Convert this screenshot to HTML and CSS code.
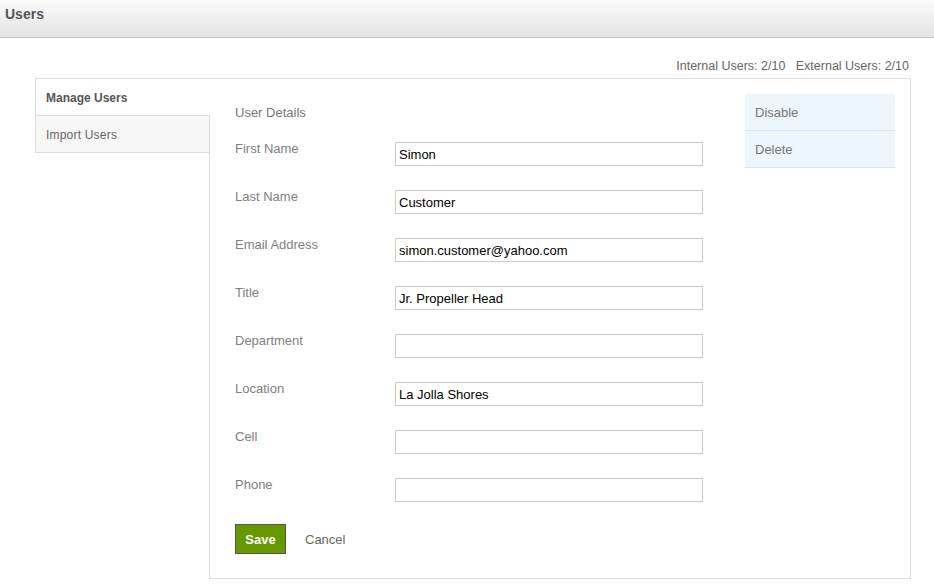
FILE: index.html
```html
<!DOCTYPE html>
<html>
<head>
<meta charset="utf-8">
<title>Users</title>
<link rel="stylesheet" href="styles.css">
</head>
<body>
<div class="header">Users</div>
<div class="wrap">
  <div class="stats">Internal Users: 2/10&nbsp;&nbsp; External Users: 2/10</div>
  <div class="layout">
    <div class="sidebar">
      <div class="tab active">Manage Users</div>
      <div class="tab">Import Users</div>
    </div>
    <div class="panel">
      <form class="form">
        <div class="section-title">User Details</div>
        <div class="row"><label>First Name</label><input type="text" value="Simon"></div>
        <div class="row"><label>Last Name</label><input type="text" value="Customer"></div>
        <div class="row"><label>Email Address</label><input type="text" value="simon.customer@yahoo.com"></div>
        <div class="row"><label>Title</label><input type="text" value="Jr. Propeller Head"></div>
        <div class="row"><label>Department</label><input type="text" value=""></div>
        <div class="row"><label>Location</label><input type="text" value="La Jolla Shores"></div>
        <div class="row"><label>Cell</label><input type="text" value=""></div>
        <div class="row"><label>Phone</label><input type="text" value=""></div>
        <div class="buttons">
          <button type="button" class="save">Save</button>
          <span class="cancel">Cancel</span>
        </div>
      </form>
      <div class="actions">
        <div class="action">Disable</div>
        <div class="action">Delete</div>
      </div>
    </div>
  </div>
</div>
</body>
</html>
```
FILE: styles.css
```css
* { box-sizing: border-box; }
body {
  margin: 0;
  font-family: "Liberation Sans", Arial, sans-serif;
  background: #fff;
  color: #666;
}
.header {
  height: 38px;
  border-bottom: 1px solid #c9c9c9;
  background: linear-gradient(#fbfbfb, #e3e3e3);
  font-size: 14px;
  font-weight: bold;
  color: #555;
  padding-left: 5px;
  line-height: 29px;
}
.wrap {
  padding: 0 23px 0 35px;
}
.stats {
  margin-top: 21px;
  margin-bottom: 5px;
  text-align: right;
  padding-right: 2px;
  font-size: 12.5px;
  line-height: 14px;
  color: #666;
}
.layout {
  display: flex;
  align-items: flex-start;
}
.sidebar {
  width: 174px;
  flex: none;
  position: relative;
  z-index: 1;
}
.tab {
  height: 37px;
  line-height: 36px;
  padding: 1px 0 0 10px;
  font-size: 12px;
  letter-spacing: 0.2px;
  color: #666;
  background: #f7f7f7;
  border-left: 1px solid #dcdcdc;
  border-bottom: 1px solid #dcdcdc;
}
.tab.active {
  height: 38px;
  line-height: 36px;
  border-top: 1px solid #dcdcdc;
  background: #fff;
  margin-right: -1px;
  font-weight: bold;
  letter-spacing: 0;
  color: #555;
}
.panel {
  flex: none;
  width: 702px;
  height: 501px;
  border: 1px solid #dcdcdc;
  display: flex;
  align-items: flex-start;
  justify-content: space-between;
  padding: 15px 15px 0 25px;
}
.form {
  width: 468px;
  margin-top: 10px;
}
.section-title {
  font-size: 13px;
  line-height: 16px;
  padding-top: 1px;
  color: #777;
  margin-bottom: 19px;
}
.row {
  display: flex;
  height: 48px;
}
.row label {
  width: 160px;
  padding-top: 1px;
  font-size: 13px;
  line-height: 16px;
  color: #808080;
}
.row input {
  margin: 2px 0 0;
  width: 308px;
  height: 24px;
  border: 1px solid #cccccc;
  padding: 0 3px;
  font-family: "Liberation Sans", Arial, sans-serif;
  font-size: 13px;
  color: #000;
  outline: none;
}
.buttons {
  display: flex;
  align-items: center;
  gap: 19px;
}
.save {
  width: 51px;
  height: 30px;
  background: #669900;
  border: 1px solid #555;
  color: #fff;
  font-family: "Liberation Sans", Arial, sans-serif;
  font-weight: bold;
  font-size: 13px;
  padding: 0;
}
.cancel {
  font-size: 13px;
  color: #666;
}
.actions {
  width: 150px;
  background: #eef6fd;
}
.action {
  height: 37px;
  line-height: 35px;
  padding: 1px 0 0 10px;
  border-bottom: 1px solid #dbe6ef;
  font-size: 13px;
  color: #777;
}
```
